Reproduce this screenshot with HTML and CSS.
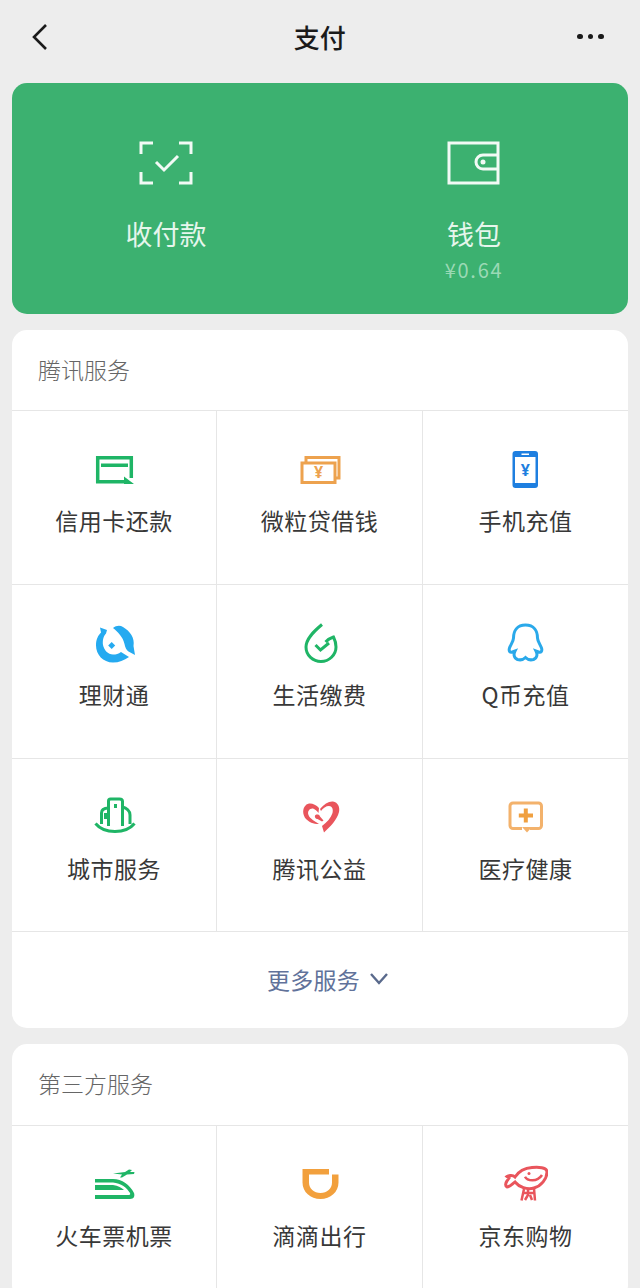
FILE: index.html
```html
<!DOCTYPE html>
<html lang="zh-CN">
<head>
  <meta charset="UTF-8" />
  <title>支付</title>
  <link rel="stylesheet" href="styles.css">
</head>
<body>
  <div class="page">
    <div class="top-bar">
      <svg class="back-icon" width="20" height="30" viewBox="0 0 20 30"><path d="M16 3 4 15l12 12" /></svg>
      <span class="top-title">支付</span>
      <div class="more-dots"><i></i><i></i><i></i></div>
    </div>

    <div class="pay-card">
      <div class="pay-item">
        <svg class="pay-icon" width="54" height="48" viewBox="0 0 54 48">
          <path d="M14 4H2v11M40 4h12v11M2 33v11h12M52 33v11H40" />
          <path d="m17 23 8 8 14-14" />
        </svg>
        <div class="pay-label">收付款</div>
      </div>
      <div class="pay-item">
        <svg class="pay-icon" width="54" height="48" viewBox="0 0 54 48">
          <rect x="2" y="4" width="49" height="40" />
          <path d="M51 16H36a6.500 6.500 0 0 0 0 14h15" />
          <circle class="dot" cx="36" cy="23" r="2.500" />
        </svg>
        <div class="pay-label">钱包</div>
        <div class="pay-amount">¥0.64</div>
      </div>
    </div>

    <div class="service-card">
      <div class="service-title">腾讯服务</div>
      <div class="service-grid">
        <div class="service-cell">
          <svg class="service-icon" viewBox="0 0 44 44">
            <path class="line green wide" d="M39.300 31V10.800H5.700v24H33" />
            <path class="fill green" d="M9 16.500h27V20H9zM32 29.500l10 7.500H32z" />
          </svg>
          <div class="service-name">信用卡还款</div>
        </div>
        <div class="service-cell">
          <svg class="service-icon" viewBox="0 0 44 44">
            <path class="line orange" d="M8 16v-5.500h33v20.500h-4" />
            <rect class="line orange" x="4" y="16" width="33" height="19.500" />
            <text class="icon-text orange-text" x="20.500" y="31">¥</text>
          </svg>
          <div class="service-name">微粒贷借钱</div>
        </div>
        <div class="service-cell">
          <svg class="service-icon" viewBox="0 0 44 44">
            <rect class="fill blue" x="8.500" y="4" width="25.500" height="37" rx="3" />
            <rect class="fill white" x="11" y="10" width="20.500" height="26" />
            <rect class="fill white" x="17.500" y="6.500" width="7.500" height="1.500" />
            <text class="icon-text blue-text" x="21.250" y="29">¥</text>
          </svg>
          <div class="service-name">手机充值</div>
        </div>

        <div class="service-cell">
          <svg class="service-icon" viewBox="0 0 44 44">
            <path class="fill sky" d="M21 7C24 4.500 28 4 31 6c7 4 12 11 10.500 19l1.500 9-6.500-3.500c-2-1-3.500-4.500-4-7.500C31 16 26 11 21 7z" />
            <path class="fill sky" d="m8 6.500 7 2.500-1 3.500c-3 3-3.500 7.500-3 11.500 1 5 5 9.500 10 9.500 3 0 5.500-.5 8-2.500l8 5c-5 3.500-10 5.500-16 5.500-10 0-17-8-17-17 0-6 2-10 5-13z" />
            <path class="fill sky" d="m19.700 21 3.500 3.500-3.500 3.500-3.500-3.500z" />
          </svg>
          <div class="service-name">理财通</div>
        </div>
        <div class="service-cell">
          <svg class="service-icon" viewBox="0 0 44 44">
            <path class="line green" d="M24 3.500C15 11 8 18 8 26c0 8.500 7 14.500 15 14.500S38 34 38 26c0-4-1-7-2.500-10-3 1-6 3-8 5" />
            <path class="line green" d="m17.500 24 5 5 8.500-7" />
          </svg>
          <div class="service-name">生活缴费</div>
        </div>
        <div class="service-cell">
          <svg class="service-icon" viewBox="0 0 44 44">
            <path class="line sky" d="M21.500 4C13 4 9.500 10 9.500 17c0 3-2.500 6-4 10-1 3 .5 5 3 4l2.500-1c-1.500 3-1.500 7 2.500 8.500 3.500 1 6.500-.5 8-2 1.500 1.500 4.500 3 8 2 4-1.500 4-5.500 2.500-8.500l2.500 1c2.500 1 4-1 3-4-1.500-4-4-7-4-10C33.500 10 30 4 21.500 4z" />
          </svg>
          <div class="service-name">Q币充值</div>
        </div>

        <div class="service-cell">
          <svg class="service-icon" viewBox="0 0 44 44">
            <path class="line green" d="M9.500 29v-11c0-3 2.500-5 7-5M16.500 31V6c0-1.500 1-2 2-2h9c2 0 3 1 3 2.500V31M30.500 12c4 1 7.500 4 7.500 8v9" />
            <path class="line green" d="M13.500 18v6M23.500 9v4" />
            <path class="line green" d="M3.500 28.500c4.500 5.500 11.500 8 19.500 8s15-2.500 19.500-8" />
          </svg>
          <div class="service-name">城市服务</div>
        </div>
        <div class="service-cell">
          <svg class="service-icon" viewBox="0 0 44 44">
            <path class="fill red" d="M21 13c-4-4.500-10-6-13-3-4 3.500-3.500 10 0 14 3 3 7 5 13 5-4-3-9-5-10.500-9-1.500-4 1.500-7 4.500-6.500 2 .5 4 2.500 5.500 4.500z" />
            <path class="fill red" d="M22 14c4-5 9-8 13-7.500 5 1 7 5.500 6 10.500-2 8-9 15-15 20.500L24 31c5-4 9-8 10.500-13 1-4-.5-7-3.500-7s-6 2-8 5z" />
            <path class="fill red" d="M17.500 20c1.500-1 4-.5 4.500 1.500l3.500 4-1.500 1-4.500-2.500c-2 0-3.500-2.500-2-4z" />
          </svg>
          <div class="service-name">腾讯公益</div>
        </div>
        <div class="service-cell">
          <svg class="service-icon" viewBox="0 0 44 44">
            <path class="line amber" d="M26 33.500h8.500a3 3 0 0 0 3-3V11a3 3 0 0 0-3-3H9a3 3 0 0 0-3 3v19.500a3 3 0 0 0 3 3h9" />
            <path class="fill amber" d="m18 32 10 0-5 5.500z" />
            <path class="fill plus" d="M19.800 13.500h4v5h5.200v4h-5.200v5h-4v-5h-5v-4h5z" />
          </svg>
          <div class="service-name">医疗健康</div>
        </div>
      </div>
      <div class="more-row">
        <span>更多服务</span>
        <svg width="22" height="16" viewBox="0 0 22 16"><path d="m3 3 8 9 8-9" /></svg>
      </div>
    </div>

    <div class="service-card">
      <div class="service-title tall">第三方服务</div>
      <div class="service-grid">
        <div class="service-cell">
          <svg class="service-icon" viewBox="0 0 44 44">
            <path class="fill green" d="m21 11.500 12-1.500 4-2.500 3 .5-2 2 4.500 0-.5 2-7 .5-5 3h-2l2-3z" />
            <path class="fill green" d="M3 17h18c9 0 17 6 21 14 1 3 0 6-4 6H3v-4h34c1 0 1.500-1 1-2-3-5-9-10-17-10.500H3z" />
            <path class="fill green" d="M3 23h18c5 .5 9 3 11 5H3z" />
          </svg>
          <div class="service-name">火车票机票</div>
        </div>
        <div class="service-cell">
          <svg class="service-icon" viewBox="0 0 44 44">
            <path class="fill didi" d="M4.500 7H31v5.500H11v8c0 6 5 10.500 11.500 10.500S34 26.500 34 20.500V12.500h6.500v8c0 9.500-8 16.500-18 16.500s-18-7-18-16.500z" />
          </svg>
          <div class="service-name">滴滴出行</div>
        </div>
        <div class="service-cell">
          <svg class="service-icon" viewBox="0 0 44 44">
            <path class="line red" d="M11 15c4-6 10-9 17-9.500 6-.5 15-.5 15 4.500 0 7-6 14-13 16-7 2-15-1-19-6-3 2-5 5-8 5-2-1-1.500-4 0-6l2-3-2-1.500c2-1.500 6-1.500 8 .5z" />
            <path class="line red thin" d="M21 14.700c2 4 12 6 17-1.700M20 27l-2.500 11.500M30 26.500l1 12M20 31h10M24 27v6l-3 5M26 33l2 5" />
            <circle class="fill red" cx="25" cy="11.500" r="1.500" />
          </svg>
          <div class="service-name">京东购物</div>
        </div>
      </div>
    </div>
  </div>
</body>
</html>
```

FILE: styles.css
```css
* {
  box-sizing: border-box;
}

html, body {
  margin: 0;
  padding: 0;
  background: #ededed;
  font-family: "Noto Sans CJK SC", "Noto Sans", sans-serif;
}

.page {
  width: 640px;
  height: 1288px;
  overflow: hidden;
  padding: 0 12px;
}

.top-bar {
  height: 83px;
  margin: 0 -12px;
  padding: 0 36px 10px 30px;
  display: flex;
  align-items: center;
  justify-content: space-between;
}

.back-icon path {
  fill: none;
  stroke: #1a1a1a;
  stroke-width: 2.6;
}

.top-title {
  font-size: 26px;
  font-weight: 500;
  color: #1a1a1a;
  margin-left: 12px;
}

.more-dots {
  display: flex;
  gap: 5px;
}

.more-dots i {
  width: 5.500px;
  height: 5.500px;
  border-radius: 50%;
  background: #1a1a1a;
}

.pay-card {
  height: 231px;
  background: #3cb170;
  border-radius: 15px;
  display: grid;
  grid-template-columns: 1fr 1fr;
  margin-bottom: 16px;
}

.pay-item {
  display: flex;
  flex-direction: column;
  align-items: center;
  padding-top: 56px;
}

.pay-icon {
  display: block;
}

.pay-icon path, .pay-icon rect {
  fill: none;
  stroke: #f2faf5;
  stroke-width: 3;
}

.pay-icon .dot {
  fill: #f2faf5;
}

.pay-label {
  font-size: 27px;
  line-height: 36px;
  margin-top: 29px;
  color: #e6f6ec;
  font-weight: 400;
}

.pay-amount {
  font-size: 20px;
  line-height: 26px;
  margin-top: 5px;
  letter-spacing: 1.700px;
  color: #9bd9b5;
}

.service-card {
  background: #fff;
  border-radius: 15px;
  margin-bottom: 16px;
  overflow: hidden;
}

.service-title {
  height: 81px;
  padding: 0 26px 3px;
  display: flex;
  align-items: center;
  font-size: 23px;
  font-weight: 300;
  color: #666;
  border-bottom: 1px solid #e6e6e6;
}

.service-title.tall {
  height: 82px;
  padding-bottom: 4px;
}

.service-grid {
  display: grid;
  grid-template-columns: 205px 206px 205px;
}

.service-cell {
  height: 174px;
  padding-top: 36px;
  display: flex;
  flex-direction: column;
  align-items: center;
  border-right: 1px solid #e6e6e6;
  border-bottom: 1px solid #e6e6e6;
}

.service-cell:nth-child(3n) {
  border-right: none;
}

.service-cell:nth-child(n+7) {
  height: 173px;
}

.service-icon {
  width: 44px;
  height: 44px;
  display: block;
}

.service-name {
  font-size: 23px;
  line-height: 30px;
  margin-top: 14px;
  color: #383838;
  font-weight: 400;
  letter-spacing: 0.500px;
}

.more-row {
  height: 96px;
  padding: 0 0 2px 17px;
  display: flex;
  align-items: center;
  justify-content: center;
  gap: 8px;
  font-size: 23px;
  letter-spacing: 0.300px;
  font-weight: 400;
  color: #61729a;
}

.more-row svg path {
  fill: none;
  stroke: #5a6a8c;
  stroke-width: 2.4;
}

.line {
  fill: none;
  stroke-width: 3;
}

.line.wide {
  stroke-width: 3.500;
}

.line.thin {
  stroke-width: 2.500;
}

.line.green { stroke: #1fb566; }
.line.orange { stroke: #eda24e; }
.line.sky { stroke: #2aa9ea; }
.line.amber { stroke: #f3b26c; }
.line.red { stroke: #e9555c; }

.fill.green { fill: #1fb566; }
.fill.blue { fill: #1e7fe0; }
.fill.white { fill: #fff; }
.fill.sky { fill: #25aaf0; }
.fill.red { fill: #e9555c; }
.fill.amber { fill: #f3b26c; }
.fill.plus { fill: #f0a040; }
.fill.didi { fill: #f2a03d; }

.icon-text {
  font-family: "Noto Sans", sans-serif;
  font-size: 16px;
  font-weight: 700;
  text-anchor: middle;
}

.orange-text { fill: #eda24e; }
.blue-text { fill: #1e7fe0; }
```
